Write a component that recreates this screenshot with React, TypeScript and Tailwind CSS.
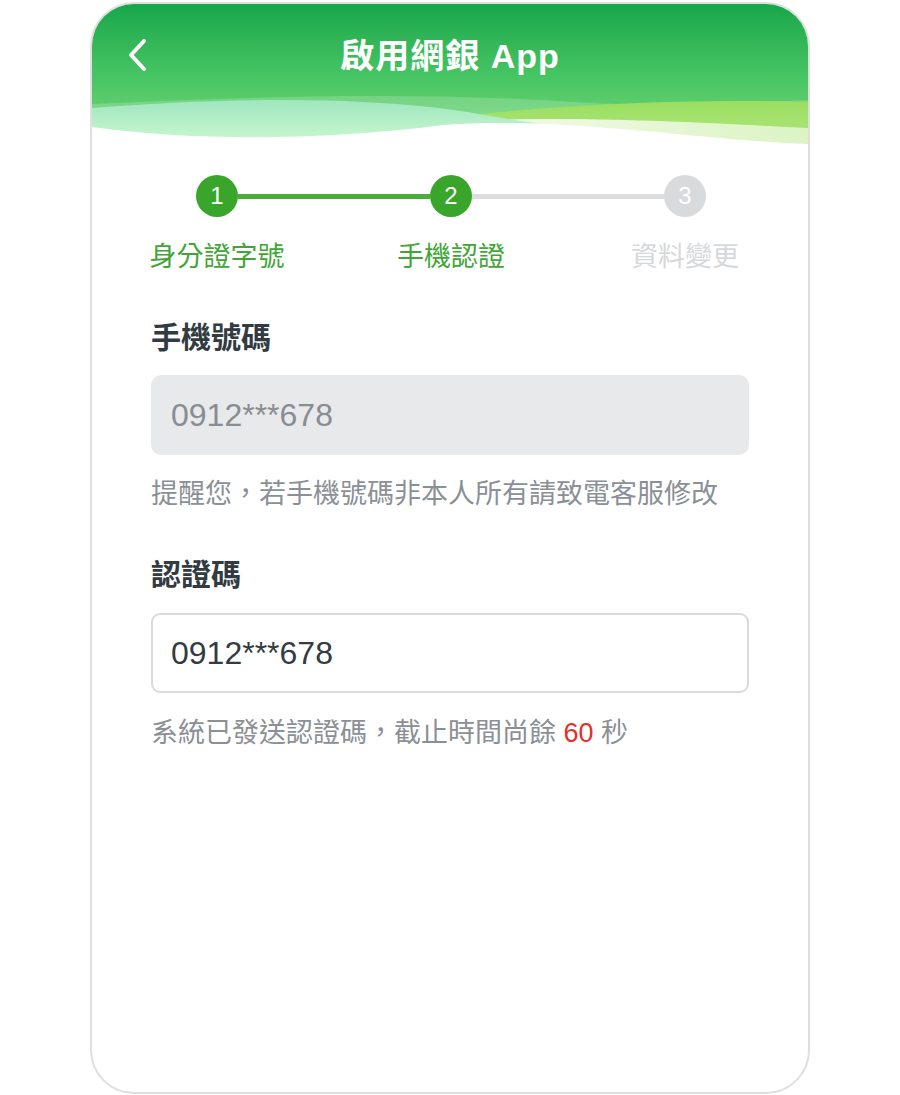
import React from 'react';

const FONT = "font-['Liberation_Sans','Noto_Sans_CJK_TC',sans-serif]";

const steps = [
  { no: 1, label: '身分證字號', done: true },
  { no: 2, label: '手機認證', done: true },
  { no: 3, label: '資料變更', done: false },
];

const HeaderWave = () => (
  <svg className="absolute inset-0 w-full h-full" viewBox="0 0 713 141" preserveAspectRatio="none">
    <defs>
      <linearGradient id="mint" x1="0" y1="0" x2="0" y2="1">
        <stop offset="0" stopColor="#9fe6c0" />
        <stop offset="1" stopColor="#cdf9cf" />
      </linearGradient>
      <linearGradient id="lime" x1="0" y1="0" x2="0" y2="1">
        <stop offset="0" stopColor="#9ade60" />
        <stop offset="1" stopColor="#b2e67f" />
      </linearGradient>
      <linearGradient id="pale" x1="0" y1="0" x2="1" y2="0">
        <stop offset="0" stopColor="#f4fbee" />
        <stop offset="1" stopColor="#dcf4c4" />
      </linearGradient>
    </defs>
    {/* soft band across the middle */}
    <path d="M0,100 C160,92 330,88 480,98 C580,104 660,98 713,96 L713,141 L0,141 Z" fill="#ffffff" opacity="0.18" />
    {/* right lime wave */}
    <path d="M330,116 C450,102 580,94 713,98 L713,141 L330,141 Z" fill="url(#lime)" />
    {/* pale band below the lime */}
    <path d="M350,118 C460,112 560,116 713,124 L713,141 L350,141 Z" fill="url(#pale)" />
    {/* left mint wave */}
    <path d="M0,104 C120,94 260,92 360,106 C400,112 430,118 460,122 L460,141 L0,141 Z" fill="url(#mint)" />
    {/* white body */}
    <path d="M0,123 C90,136 220,138 350,121 C470,112 600,136 713,140 L713,141 L0,141 Z" fill="#ffffff" />
  </svg>
);

export default function App() {
  return (
    <div className={`min-h-screen bg-white ${FONT}`}>
      <div className="ml-[90px] mt-[2px] w-[720px] h-[1092px] border-2 border-[#dfdfdf] rounded-[44px] overflow-hidden bg-white flex flex-col">
        <header className="relative h-[141px] bg-gradient-to-b from-[#15a64b] via-[#45c463] to-[#77d877]">
          <HeaderWave />
          <div className="relative h-[104px] flex items-center justify-center">
            <svg className="absolute left-[36px] top-[34px]" width="20" height="34" viewBox="0 0 20 34" fill="none">
              <path d="M16 3 L3 17 L16 31" stroke="#ffffff" strokeWidth="4" strokeLinecap="round" strokeLinejoin="round" />
            </svg>
            <h1 className="text-white text-[34px] leading-[40px] font-semibold tracking-[1px]">啟用網銀 App</h1>
          </div>
        </header>

        <main className="px-[59px]">
          {/* stepper */}
          <div className="mt-[30px] ml-[45px] flex items-center">
            {steps.map((s, i) => (
              <React.Fragment key={s.no}>
                {i > 0 && (
                  <div className={`w-[192px] h-[5px] shrink-0 ${s.done ? 'bg-[#4aad38]' : 'bg-[#dcdee0]'}`} />
                )}
                <div
                  className={`w-[42px] h-[42px] shrink-0 rounded-full flex items-center justify-center text-white text-[24px] leading-none ${
                    s.done ? 'bg-[#3aa52b]' : 'bg-[#d9dadc]'
                  }`}
                >
                  {s.no}
                </div>
              </React.Fragment>
            ))}
          </div>
          <div className="mt-[22px] -ml-[51px] flex">
            {steps.map((s) => (
              <div
                key={s.no}
                className={`w-[234px] shrink-0 text-center text-[27px] leading-[36px] ${s.done ? 'text-[#3fa637]' : 'text-[#d6d8da]'}`}
              >
                {s.label}
              </div>
            ))}
          </div>

          {/* phone */}
          <h2 className="mt-[43px] text-[30px] leading-[40px] font-bold text-[#323b41]">手機號碼</h2>
          <div className="mt-[17px] h-[80px] rounded-[10px] bg-[#e8e9eb] flex items-center px-[20px]">
            <span className="text-[32px] text-[#878d92]">0912***678</span>
          </div>
          <p className="mt-[21px] text-[27px] leading-[36px] text-[#8a9095]">提醒您，若手機號碼非本人所有請致電客服修改</p>

          {/* verification code */}
          <h2 className="mt-[43px] text-[30px] leading-[40px] font-bold text-[#323b41]">認證碼</h2>
          <div className="mt-[18px] h-[80px] rounded-[9px] border-2 border-[#d8dbde] bg-white flex items-center px-[18px]">
            <span className="text-[32px] text-[#333c42]">0912***678</span>
          </div>
          <p className="mt-[22px] text-[27px] leading-[36px] text-[#8a9095]">
            系統已發送認證碼，截止時間尚餘 <span className="text-[#e2312b]">60</span> 秒
          </p>
        </main>
      </div>
    </div>
  );
}
